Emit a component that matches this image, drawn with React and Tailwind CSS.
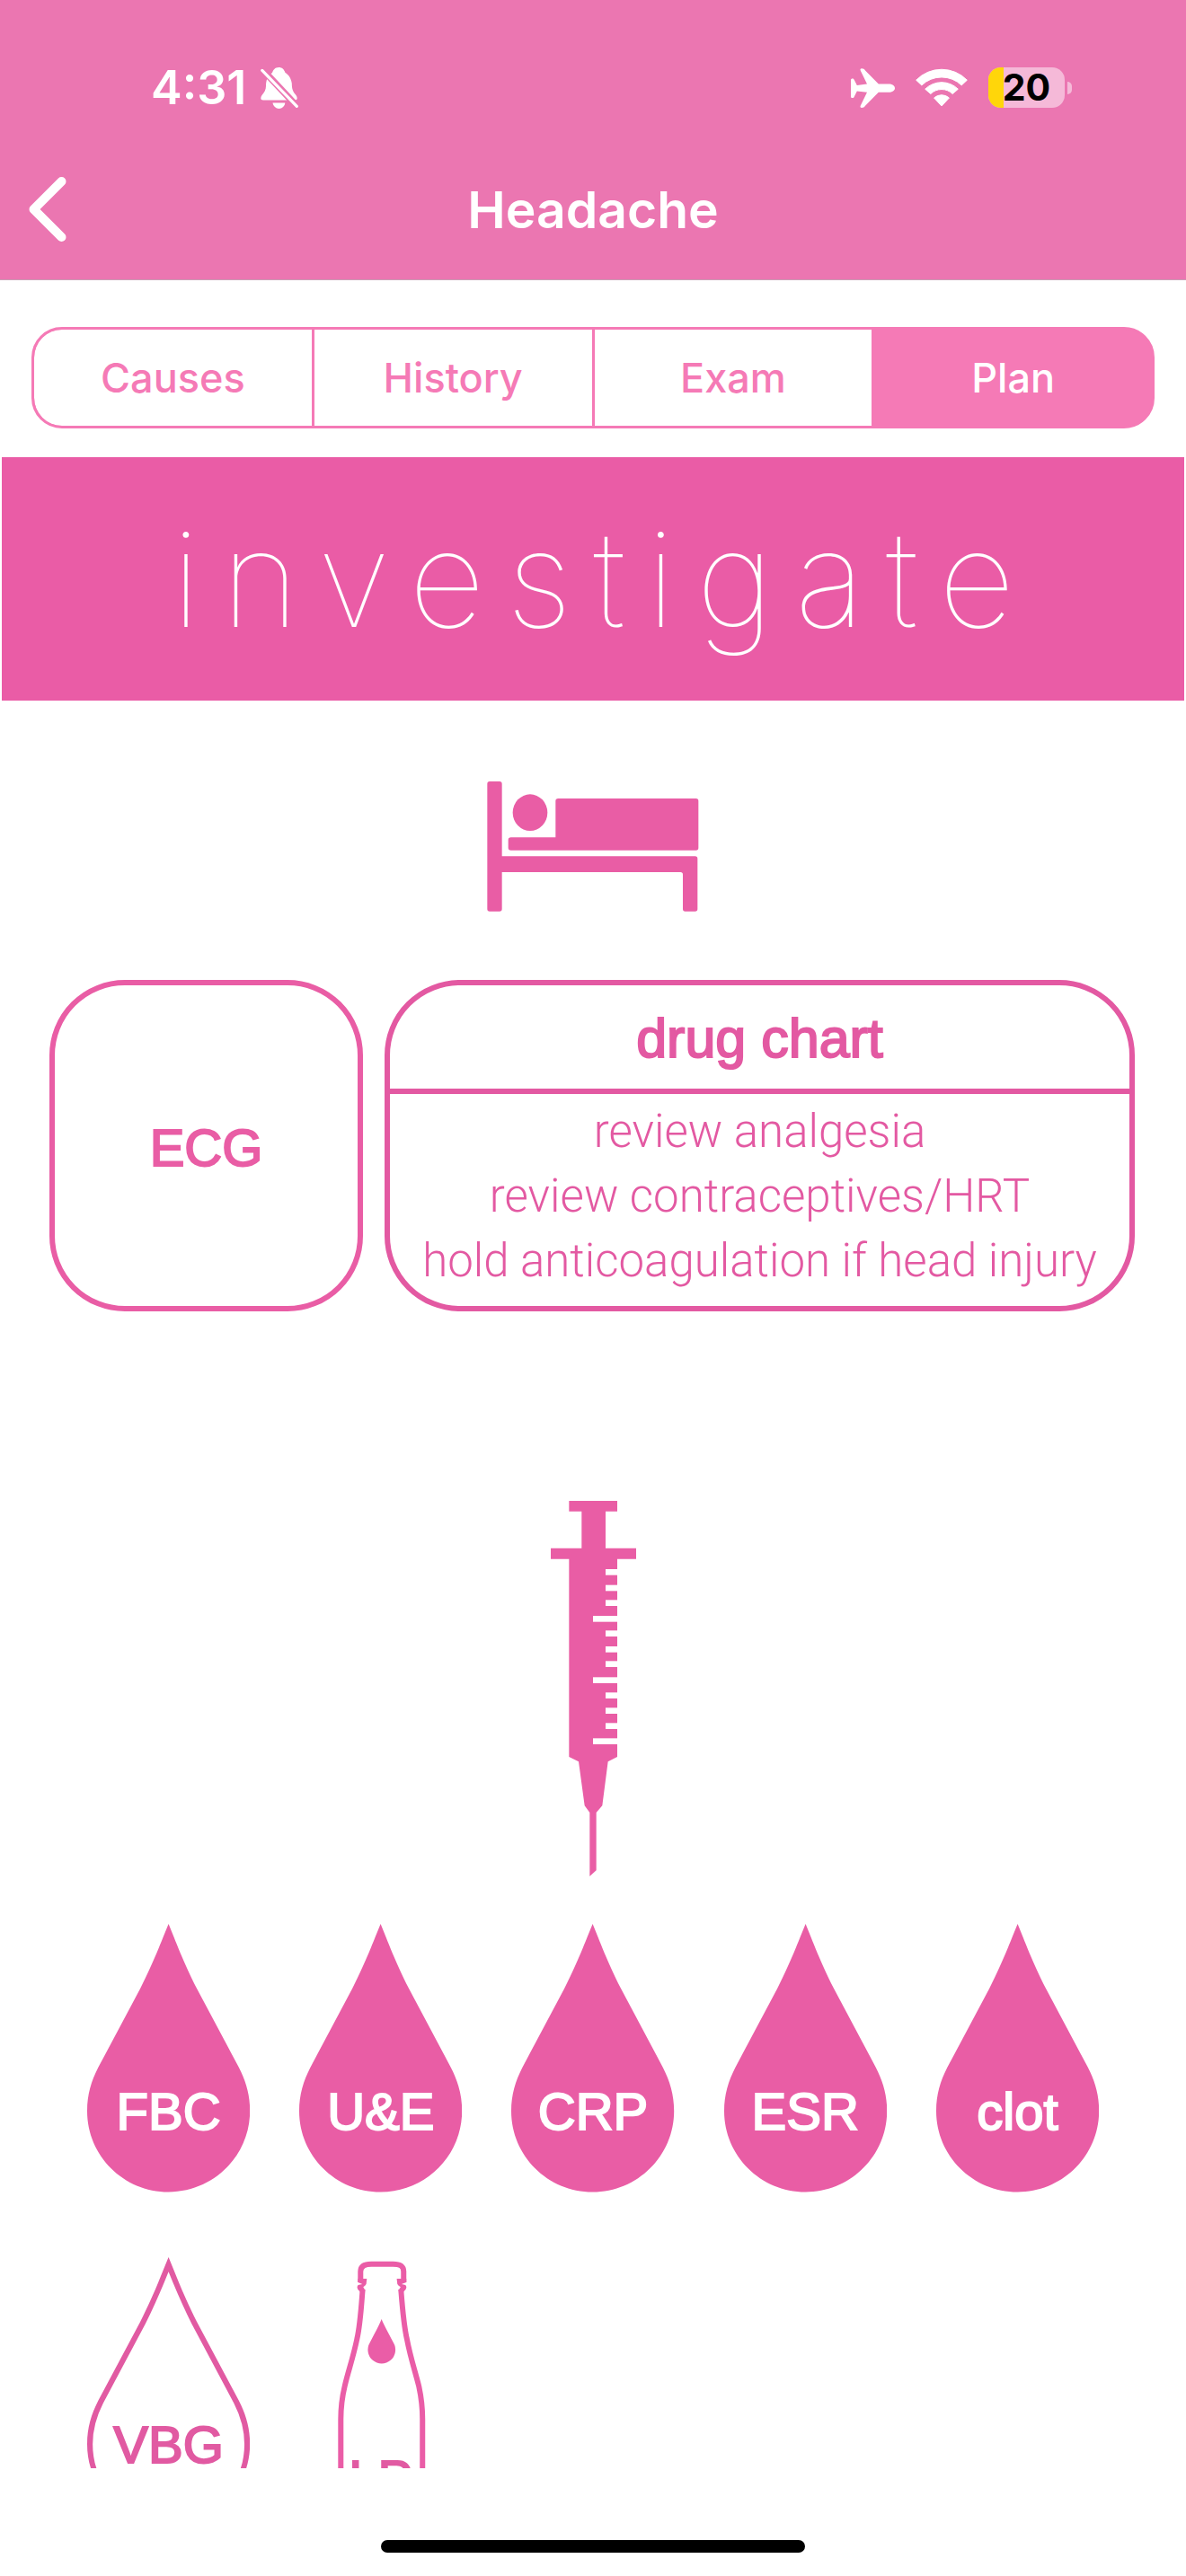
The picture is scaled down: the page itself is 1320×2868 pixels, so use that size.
import React, { useId, useState } from "react";

const DROP =
  "M385 65 C360 125 340 182 290 282 L150 545 C127 590 113 635 113 690 C113 840 235 961 385 961 C535 961 657 840 657 690 C657 635 643 590 620 545 L480 282 C430 182 410 125 385 65 Z";

function BellOffIcon() {
  const id = useId();
  return (
    <svg className="h-[46px] w-[42px]" viewBox="0 0 42 46" aria-label="Silent mode">
      <mask id={id}>
        <rect width="42" height="46" fill="white" />
        <path d="M-2 -2 L44 47" stroke="black" strokeWidth="7.5" />
      </mask>
      <g fill="white" mask={`url(#${id})`}>
        <path d="M20.2 0 C16 0 14 3 13 6 C8 9 6 14 6 21 C6 25 4 28 1.5 31 C-.5 34 0 36.5 3 36.5 H38 C41 36.5 41.5 34 39.5 31 C36 27 34.8 24 34.8 18 C34 12 31 8 27.5 6 C26 2 24 0 20.2 0 Z" />
        <path d="M13.5 39.5 H27.3 C27 43 24 46 20.5 46 S14 43 13.5 39.5 Z" />
      </g>
      <path d="M1.8 3.4 L40.3 43.4" stroke="white" strokeWidth="3.2" strokeLinecap="round" />
    </svg>
  );
}

function AirplaneIcon() {
  return (
    <svg className="h-[44px] w-[49px]" viewBox="0 0 49 44" aria-label="Airplane mode">
      <path
        fill="white"
        d="M12 .3 C14 .3 15 1 16 2.5 L30.8 17.6 H42 C46 17.6 49 19.6 49 22.2 S46 26.8 42 26.8 H30.8 L16 41.8 C15 43.3 14 44 12 44 C10.5 44 10.3 43 10.7 41.8 L18 26.8 L6.8 25.5 L3.8 31.5 C3.4 32.5 2.8 33 2 33 C.6 33 0 32.5 0 31.5 V13 C0 12 .6 11.4 2 11.4 C2.8 11.4 3.4 12 3.8 13 L6.8 19 L18 17.6 L10.7 2.5 C10.3 1.3 10.5 .3 12 .3 Z"
      />
    </svg>
  );
}

function WifiIcon() {
  return (
    <svg className="h-[43px] w-[58px]" viewBox="0 0 58 43" aria-label="Wi-Fi">
      <g fill="white" stroke="white" strokeWidth="1" strokeLinejoin="round">
        <path d="M.7 13.2 A39.5 39.5 0 0 1 57.3 13.2 L51.2 18.9 A32 32 0 0 0 6.8 18.9 Z" />
        <path d="M10.7 23.2 A26 26 0 0 1 47.3 23.2 L41.2 28.5 A17.5 17.5 0 0 0 16.8 28.5 Z" />
        <path d="M20.6 33 A12.5 12.5 0 0 1 37.4 33 L29 42 Z" />
      </g>
    </svg>
  );
}

function Battery() {
  return (
    <div className="flex items-center gap-[3px]">
      <div className="relative flex h-[45px] w-[85px] items-center justify-center rounded-[14px] bg-[#f5b9d8]">
        <span className="absolute inset-y-0 left-0 w-[17px] rounded-l-[14px] bg-[#ffd60a]" />
        <span className="relative text-[41px] leading-none font-bold text-black">20</span>
      </div>
      <span className="h-[14px] w-[5px] rounded-r-full bg-[#f5b9d8]" />
    </div>
  );
}

function BedIcon() {
  return (
    <svg className="h-[145px] w-[236px]" viewBox="128 90 708 435" fill="#e95da5" aria-hidden="true">
      <path d="M137 90 H170 Q178 90 178 98 V340 H823 Q831 340 831 348 V516 Q831 524 823 524 H790 Q782 524 782 516 V401 Q782 393 774 393 H178 V516 Q178 524 170 524 H137 Q129 524 129 516 V98 Q129 90 137 90 Z" />
      <path d="M366 147 H826 Q834 147 834 155 V312 Q834 320 826 320 H208 Q199 320 199 312 V285 Q199 277 208 277 H357 V155 Q357 147 366 147 Z" />
      <ellipse cx="272" cy="194" rx="58" ry="61" />
    </svg>
  );
}

function SyringeIcon() {
  const shortMarks = [321, 374, 424, 526, 579, 628, 733, 784, 835];
  const longMarks = [477, 682, 886];
  return (
    <svg className="h-[418px] w-[95px]" viewBox="99 93 285 1254" aria-hidden="true">
      <path
        fill="#e95da5"
        d="M160 93 H321 V128 H282 V251 H384 V287 H321 V948 L290 964 L271 1111 L251 1134 V1327 L229 1347 V1134 L212 1111 L192 964 L160 948 V287 H99 V251 H202 V128 H160 Z"
      />
      <g fill="white">
        {shortMarks.map((y) => (
          <rect key={y} x="282" y={y} width="41" height="20" />
        ))}
        {longMarks.map((y) => (
          <rect key={y} x="240" y={y} width="83" height="20" />
        ))}
      </g>
    </svg>
  );
}

function DropShape({ outlined }) {
  const id = useId();
  if (!outlined) {
    return (
      <svg className="col-start-1 row-start-1 w-full" viewBox="113 65 544 897" aria-hidden="true">
        <path d={DROP} fill="#e95da5" />
      </svg>
    );
  }
  return (
    <svg className="col-start-1 row-start-1 w-full" viewBox="113 65 544 897" aria-hidden="true">
      <clipPath id={id}>
        <path d={DROP} />
      </clipPath>
      <path d={DROP} fill="none" stroke="#e15aa2" strokeWidth="37" clipPath={`url(#${id})`} />
    </svg>
  );
}

function BottleShape() {
  return (
    <svg className="col-start-1 row-start-1 w-full" viewBox="821 98 544 897" aria-hidden="true">
      <g fill="none" stroke="#ea5da7" strokeWidth="18">
        <path d="M1026 182 V146 C1026 127 1040 121 1062 121 H1134 C1158 121 1170 128 1170 146 V182" />
        <path d="M1033 206 C1028 270 1025 325 1014 372 C1001 435 985 478 973 530 C963 572 960 600 960 640 V1020 H1233 V640 C1233 600 1230 572 1221 530 C1208 478 1193 435 1181 372 C1170 325 1166 270 1161 206" />
      </g>
      <g fill="#ea5da7">
        <path d="M1017 170 H1047 L1045 188 Q1042 194 1035 198 L1042 210 L1025 214 Q1009 202 1018 191 L1032 188 L1017 182 Z" />
        <path d="M1179 170 H1147 L1149 188 Q1152 194 1160 198 L1152 210 L1169 214 Q1185 202 1176 191 L1163 188 L1179 182 Z" />
        <path d="M1096 305 C1087 328 1080 340 1057 384 A46 46 0 1 0 1136 384 C1113 340 1106 328 1096 305 Z" />
      </g>
    </svg>
  );
}

const MEDIUM = "leading-none [-webkit-text-stroke:2px_currentColor]";

function BloodTest({ label, outlined }) {
  return (
    <li className="grid">
      <DropShape outlined={outlined} />
      <span
        className={`${MEDIUM} col-start-1 row-start-1 self-center pt-[120px] text-center text-[58px] ${
          outlined ? "text-[#e15aa2]" : "text-white"
        }`}
      >
        {label}
      </span>
    </li>
  );
}

const TABS = ["Causes", "History", "Exam", "Plan"];

export default function App() {
  const [active, setActive] = useState("Plan");
  return (
    <div className="flex h-screen flex-col bg-white font-['Inter',sans-serif]">
      <header className="shrink-0 border-b border-[#c9a0b5] bg-[#eb76b1] text-white">
        <div className="flex items-center justify-between pt-[40px] pr-[127px] pl-[168px]">
          <div className="flex h-[115px] items-center gap-4">
            <time className="text-[52px] leading-none font-semibold">4:31</time>
            <BellOffIcon />
          </div>
          <div className="flex items-center gap-[23px]">
            <AirplaneIcon />
            <WifiIcon />
            <Battery />
          </div>
        </div>
        <div className="grid h-[156px] grid-cols-[1fr_auto_1fr] items-center">
          <button type="button" aria-label="Back" className="ml-7 flex w-[50px] justify-center">
            <svg className="h-[76px] w-[44px]" viewBox="0 0 44 76" fill="none">
              <path d="M37.5 7 L6.5 38 L37.5 69" stroke="white" strokeWidth="10" strokeLinecap="round" strokeLinejoin="round" />
            </svg>
          </button>
          <h1 className="text-[57px] leading-none font-semibold">Headache</h1>
        </div>
      </header>

      <main className="min-h-0 flex-1 overflow-hidden">
        <div
          role="tablist"
          className="mx-[35px] mt-[52px] grid h-[113px] grid-cols-4 gap-[3px] overflow-hidden rounded-[34px] border-[3px] border-[#f57ab6] bg-[#f57ab6]"
        >
          {TABS.map((tab) => (
            <button
              key={tab}
              type="button"
              role="tab"
              aria-selected={tab === active}
              onClick={() => setActive(tab)}
              className={`text-[45px] leading-none font-medium first:rounded-l-[31px] last:rounded-r-[31px] ${
                tab === active ? "bg-[#f57ab6] text-white" : "bg-white text-[#f57ab6]"
              }`}
            >
              {tab}
            </button>
          ))}
        </div>

        <div className="font-['Liberation_Sans',Arial,sans-serif]">
          <h2 className="mx-[2px] mt-8 flex h-[271px] items-center justify-center bg-[#ea5ca6] pl-6 font-['Inter',sans-serif] text-[148px] leading-none font-thin tracking-[0.16em] text-white">
            investigate
          </h2>

          <div className="mt-[90px] flex justify-center">
            <BedIcon />
          </div>

          <div className="mt-[76px] mr-[57px] ml-[55px] grid h-[369px] grid-cols-[349fr_835fr] gap-6">
            <section className="flex items-center justify-center rounded-[84px] border-[6px] border-[#e95da5] pt-1">
              <h3 className={`${MEDIUM} text-[58px] text-[#e95da5]`}>ECG</h3>
            </section>
            <section className="overflow-hidden rounded-[84px] border-[6px] border-[#e359a2] text-center text-[#e359a2]">
              <h3 className={`${MEDIUM} flex h-[121px] items-center justify-center border-b-[6px] border-[#e359a2] pt-1 text-[61px]`}>
                drug chart
              </h3>
              <ul className="pt-[6px] font-['Roboto',sans-serif] text-[51px] leading-[72px] font-light whitespace-nowrap">
                <li>review analgesia</li>
                <li>review contraceptives/HRT</li>
                <li>hold anticoagulation if head injury</li>
              </ul>
            </section>
          </div>

          <div className="mt-[211px] flex justify-center">
            <SyringeIcon />
          </div>

          <ul className="mt-[53px] grid grid-cols-5 gap-x-[55px] gap-y-[72px] px-[97px]">
            <BloodTest label="FBC" />
            <BloodTest label="U&E" />
            <BloodTest label="CRP" />
            <BloodTest label="ESR" />
            <BloodTest label="clot" />
            <BloodTest label="VBG" outlined />
            <li className="grid">
              <BottleShape />
              <span className={`${MEDIUM} col-start-1 row-start-1 self-center pt-[196px] text-center text-[58px] text-[#e15aa2]`}>LP</span>
            </li>
          </ul>
        </div>
      </main>

      <footer className="flex h-[120px] shrink-0 items-end justify-center pb-[26px]">
        <div className="h-[14px] w-[472px] rounded-full bg-black" />
      </footer>
    </div>
  );
}
